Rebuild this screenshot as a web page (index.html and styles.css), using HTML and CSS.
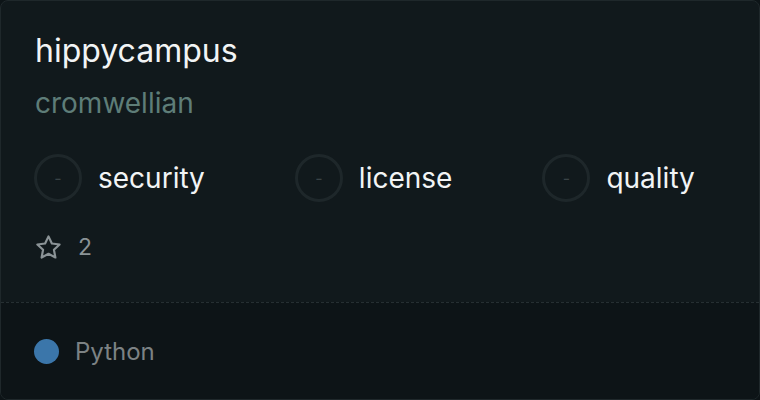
FILE: index.html
```html
<!DOCTYPE html>
<html lang="en">
<head>
  <meta charset="UTF-8">
  <meta name="viewport" content="width=device-width, initial-scale=1.0">
  <title>hippycampus</title>
  <link rel="stylesheet" href="styles.css">
</head>
<body>

  <div class="card">
    <div class="cardBody">
      <div class="repoName">hippycampus</div>
      <div class="owner">cromwellian</div>

      <div class="scores">
        <div class="score">
          <span class="ring">-</span>
          <span class="scoreLabel">security</span>
        </div>
        <div class="score">
          <span class="ring">-</span>
          <span class="scoreLabel">license</span>
        </div>
        <div class="score">
          <span class="ring">-</span>
          <span class="scoreLabel">quality</span>
        </div>
      </div>

      <div class="stars">
        <svg class="starIcon" viewBox="0 0 24 24" width="29" height="29">
          <path d="M12 2.8l2.8 5.9 6.4.8-4.7 4.4 1.2 6.4L12 17.2l-5.7 3.1 1.2-6.4-4.7-4.4 6.4-.8z" fill="none" stroke="currentColor" stroke-width="1.8" stroke-linejoin="round"/>
        </svg>
        <span class="starCount">2</span>
      </div>
    </div>

    <div class="cardFooter">
      <span class="langDot"></span>
      <span class="langName">Python</span>
    </div>
  </div>

</body>
</html>
```

FILE: styles.css
```css
body {
  margin: 0;
  background: #0d1417;
  font-family: Inter, "Noto Sans", sans-serif;
}

.card {
  box-sizing: border-box;
  width: 760px;
  height: 400px;
  border: 1px solid #1f282b;
  border-radius: 8px;
  background-color: #11191c;
  display: flex;
  flex-direction: column;
  overflow: hidden;
}

.cardBody {
  flex: 1;
  padding: 30px 33px 0 33px;
}

.repoName {
  font-size: 32px;
  color: #f2f4f5;
  line-height: 40px;
  padding-left: 1px;
}

.owner {
  font-size: 28px;
  color: #5e7d78;
  line-height: 36px;
  margin-top: 14px;
  padding-left: 1px;
}

.scores {
  display: flex;
  gap: 90px;
  margin-top: 33px;
}

.score {
  display: flex;
  align-items: center;
  gap: 16px;
}

.ring {
  box-sizing: border-box;
  width: 48px;
  height: 48px;
  border: 3px solid #1e272a;
  border-radius: 50%;
  display: flex;
  align-items: center;
  justify-content: center;
  color: #3a4346;
  font-size: 16px;
}

.scoreLabel {
  font-size: 28px;
  color: #f2f4f5;
}

.stars {
  display: flex;
  align-items: center;
  gap: 15px;
  margin-top: 31px;
  height: 28px;
  color: #8b9396;
}

.starIcon {
  display: block;
}

.starCount {
  font-size: 23px;
}

.cardFooter {
  box-sizing: border-box;
  height: 97px;
  border-top: 1px dashed #262f32;
  background-color: #0d1417;
  display: flex;
  align-items: center;
  gap: 16px;
  padding: 0 33px;
}

.langDot {
  width: 25px;
  height: 25px;
  border-radius: 50%;
  background-color: #3b76aa;
}

.langName {
  font-size: 24px;
  color: #7c8284;
}
```
